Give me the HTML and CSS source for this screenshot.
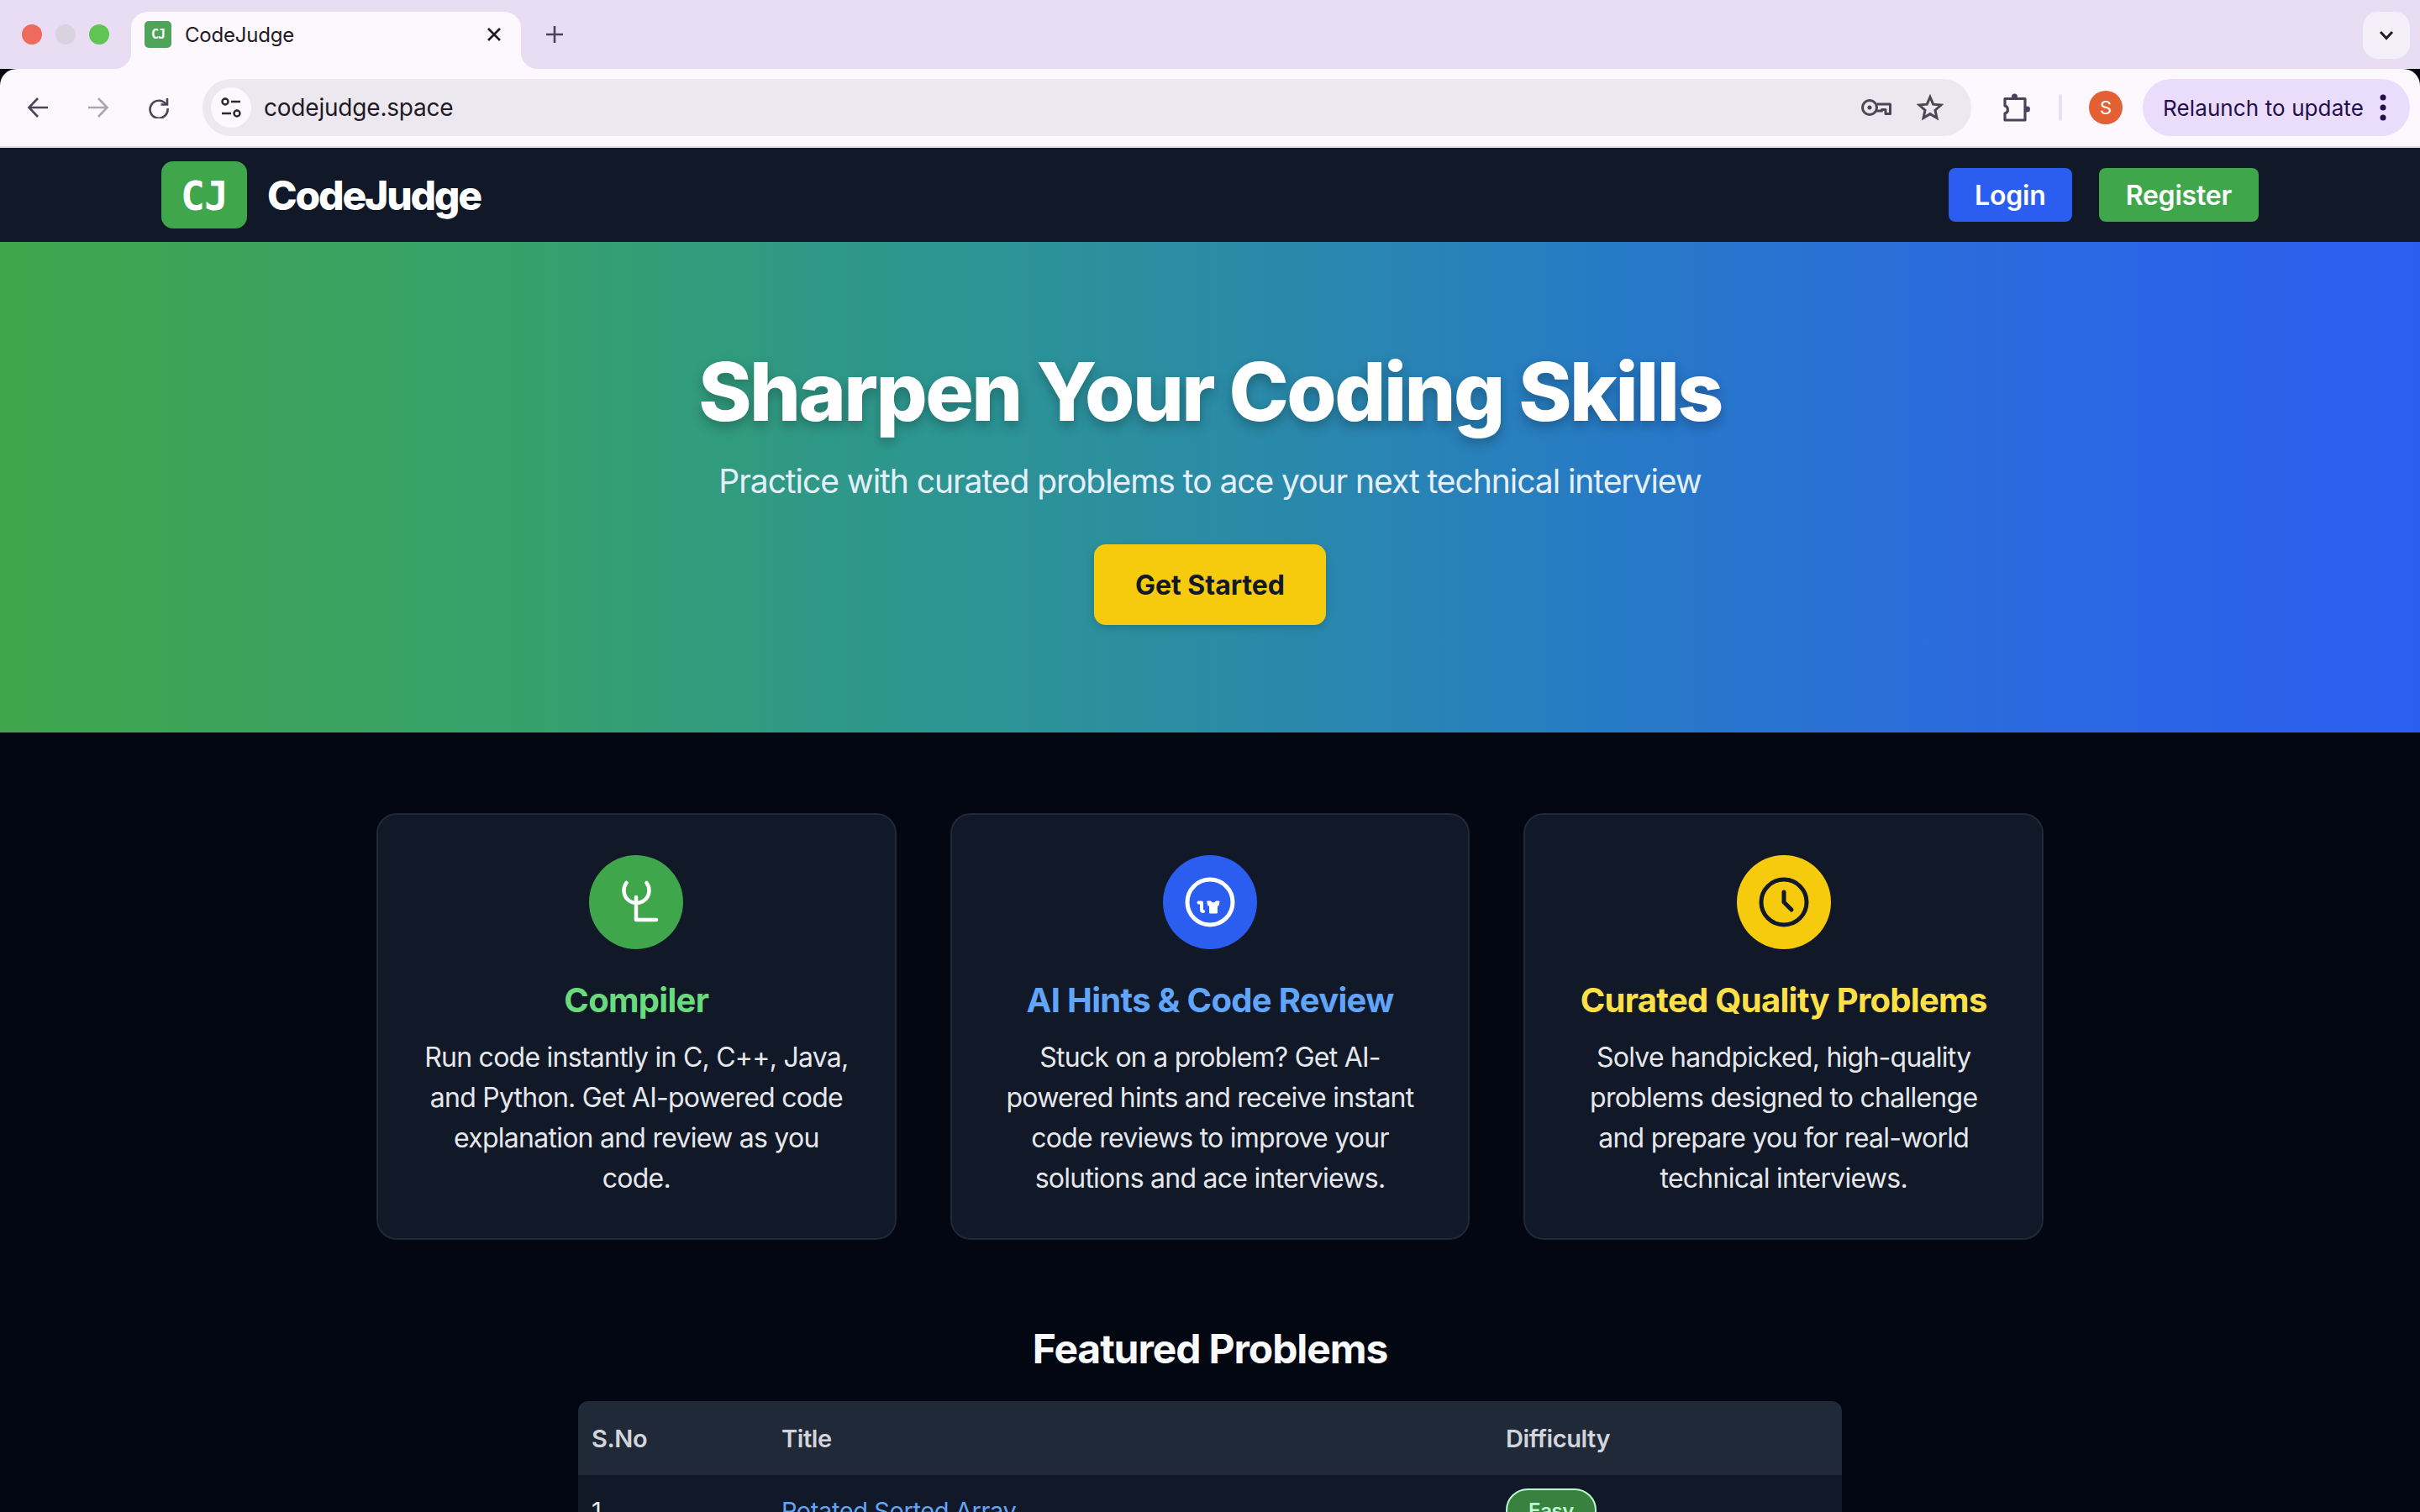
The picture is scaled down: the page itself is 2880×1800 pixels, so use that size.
FILE: index.html
```html
<!DOCTYPE html>
<html lang="en">
<head>
    <meta charset="UTF-8">
    <title>CodeJudge</title>
    <link rel="stylesheet" href="styles.css">
</head>
<body>
    <div class="window">
        <div class="tabstrip">
            <div class="lights">
                <span class="light red"></span>
                <span class="light grey"></span>
                <span class="light green"></span>
            </div>
            <div class="tab">
                <span class="favicon">CJ</span>
                <span class="tab-title">CodeJudge</span>
                <svg class="tab-close" width="20" height="20" viewBox="0 0 20 20"><path d="M3 3L17 17M17 3L3 17" stroke="#1f1a24" stroke-width="2.6" fill="none"/></svg>
            </div>
            <svg class="new-tab" width="22" height="22" viewBox="0 0 22 22"><path d="M11 1V21M1 11H21" stroke="#4a4458" stroke-width="2.6" fill="none"/></svg>
            <div class="tab-menu">
                <svg width="18" height="12" viewBox="0 0 18 12"><path d="M2 2L9 9.5L16 2" stroke="#1f1a24" stroke-width="3" fill="none"/></svg>
            </div>
        </div>
        <div class="toolbar">
            <svg class="nav-btn" width="26" height="26" viewBox="0 0 26 26"><path d="M25 13H3M13 2L2.500 13L13 24" stroke="#4a4458" stroke-width="2.600" fill="none"/></svg>
            <svg class="nav-btn" width="26" height="26" viewBox="0 0 26 26"><path d="M1 13H23M13 2L23.500 13L13 24" stroke="#aca6b4" stroke-width="2.600" fill="none"/></svg>
            <svg class="nav-btn" width="26" height="26" viewBox="0 0 26 26"><path d="M21.500 9A10.500 10.500 0 1 0 23.500 14M23 2V9.500H15.500" stroke="#4a4458" stroke-width="2.600" fill="none"/></svg>
            <div class="omnibox">
                <span class="site-info">
                    <svg width="26" height="26" viewBox="0 0 26 26" fill="none" stroke="#2a2533" stroke-width="2.400"><circle cx="6" cy="6" r="3.500"/><path d="M13 6H24M2 20H13"/><circle cx="20" cy="20" r="3.500"/></svg>
                </span>
                <span class="url">codejudge.space</span>
                <svg class="omni-icon key" width="36" height="22" viewBox="0 0 36 22" fill="none" stroke="#4a4654" stroke-width="3" stroke-linejoin="round"><circle cx="10" cy="11" r="8.500"/><circle cx="10" cy="11" r="2.500" fill="#4a4654" stroke="none"/><path d="M18.500 7H34.500V18.500H29V13.500H24.500V15H18"/></svg>
                <svg class="omni-icon" width="32" height="32" viewBox="0 0 32 32" fill="none" stroke="#4a4654" stroke-width="3"><path d="M16 3.500L19.700 12.200L29 13L22 19.200L24 28.500L16 23.600L8 28.500L10 19.200L3 13L12.300 12.200Z"/></svg>
            </div>
            <svg class="ext" width="34" height="36" viewBox="0 0 34 36" fill="none" stroke="#4a4458" stroke-width="3.200" stroke-linejoin="round"><path d="M3 7.500H27V33H3V25C7.500 24 7.500 17 3 16Z"/><circle cx="14.500" cy="5" r="3.500" fill="#4a4458" stroke="none"/><circle cx="29.500" cy="20" r="3.500" fill="#4a4458" stroke="none"/></svg>
            <span class="divider"></span>
            <span class="avatar">S</span>
            <div class="relaunch">
                <span>Relaunch to update</span>
                <svg width="8" height="32" viewBox="0 0 8 32" fill="#24104a"><circle cx="4" cy="4" r="3.500"/><circle cx="4" cy="16" r="3.500"/><circle cx="4" cy="28" r="3.500"/></svg>
            </div>
        </div>

        <nav class="navbar">
            <a class="brand" href="#">
                <span class="brand-logo">CJ</span>
                <span class="brand-name">CodeJudge</span>
            </a>
            <div class="nav-actions">
                <a class="btn btn-blue" href="#">Login</a>
                <a class="btn btn-green" href="#">Register</a>
            </div>
        </nav>

        <section class="hero">
            <h1>Sharpen Your Coding Skills</h1>
            <p>Practice with curated problems to ace your next technical interview</p>
            <a class="cta" href="#">Get Started</a>
        </section>

        <main class="content">
            <div class="features">
                <div class="card">
                    <span class="card-icon icon-green">
                        <svg width="112" height="112" viewBox="0 0 112 112" fill="none" stroke="#fff" stroke-width="4.500" stroke-linecap="round" stroke-linejoin="round"><path d="M44.500 33A15 15 0 1 0 68.500 33M56 50V77H80"/></svg>
                    </span>
                    <h3 class="title-green">Compiler</h3>
                    <p>Run code instantly in C, C++, Java, and Python. Get AI-powered code explanation and review as you code.</p>
                </div>
                <div class="card">
                    <span class="card-icon icon-blue">
                        <svg width="112" height="112" viewBox="0 0 112 112" fill="none" stroke="#fff" stroke-width="5" stroke-linecap="round" stroke-linejoin="round"><circle cx="56" cy="56" r="27"/><path d="M42.500 56.500H46V65Q46 67 48 67" stroke-width="4"/><path d="M53 55H57Q60 59 63 55H67L66 60H64.500V69H55.500V60H54Z" fill="#fff" stroke-width="1"/></svg>
                    </span>
                    <h3 class="title-blue">AI Hints &amp; Code Review</h3>
                    <p>Stuck on a problem? Get AI-powered hints and receive instant code reviews to improve your solutions and ace interviews.</p>
                </div>
                <div class="card">
                    <span class="card-icon icon-yellow">
                        <svg width="112" height="112" viewBox="0 0 112 112" fill="none" stroke="#111827" stroke-width="5" stroke-linecap="round" stroke-linejoin="round"><circle cx="56" cy="56" r="27"/><path d="M56 44V56L65 65"/></svg>
                    </span>
                    <h3 class="title-yellow">Curated Quality Problems</h3>
                    <p>Solve handpicked, high-quality problems designed to challenge and prepare you for real-world technical interviews.</p>
                </div>
            </div>

            <h2 class="section-title">Featured Problems</h2>
            <table class="problems">
                <thead>
                    <tr>
                        <th class="col-no">S.No</th>
                        <th class="col-title">Title</th>
                        <th class="col-diff">Difficulty</th>
                    </tr>
                </thead>
                <tbody>
                    <tr>
                        <td>1</td>
                        <td><a href="#">Rotated Sorted Array</a></td>
                        <td><span class="badge">Easy</span></td>
                    </tr>
                </tbody>
            </table>
        </main>
    </div>
</body>
</html>
```

FILE: styles.css
```css
* {
    box-sizing: border-box;
}
html, body {
    margin: 0;
    height: 100%;
}
body {
    font-family: Inter, "Liberation Sans", sans-serif;
    background-color: #030712;
    overflow: hidden;
}
a {
    text-decoration: none;
}
.window {
    height: 1800px;
    overflow: hidden;
    display: flex;
    flex-direction: column;
}

/* browser chrome */
.tabstrip {
    height: 82px;
    flex-shrink: 0;
    background-color: #e9ddf4;
    display: flex;
    align-items: flex-start;
    padding-left: 26px;
}
.lights {
    display: flex;
    gap: 16px;
    margin-top: 29px;
    width: 130px;
}
.light {
    width: 24px;
    height: 24px;
    border-radius: 50%;
}
.light.red { background-color: #ee6a5f; }
.light.grey { background-color: #d8d3de; }
.light.green { background-color: #61c555; }
.tab {
    position: relative;
    width: 464px;
    height: 68px;
    margin-top: 14px;
    background-color: #fdf7fe;
    border-radius: 20px 20px 0 0;
    display: flex;
    align-items: center;
    padding: 0 22px 14px 16px;
}
.tab::before,
.tab::after {
    content: "";
    position: absolute;
    bottom: 0;
    width: 20px;
    height: 20px;
}
.tab::before {
    left: -20px;
    background: radial-gradient(circle at 0 0, transparent 20px, #fdf7fe 20.5px);
}
.tab::after {
    right: -20px;
    background: radial-gradient(circle at 100% 0, transparent 20px, #fdf7fe 20.5px);
}
.favicon {
    width: 32px;
    height: 32px;
    border-radius: 5px;
    background-color: #4ea458;
    color: #fff;
    font-family: "DejaVu Sans Mono", monospace;
    font-size: 15px;
    font-weight: bold;
    letter-spacing: -1px;
    display: flex;
    align-items: center;
    justify-content: center;
}
.tab-title {
    margin-left: 16px;
    font-size: 24px;
    letter-spacing: -0.2px;
    color: #1f1a24;
    flex: 1;
}
.new-tab {
    margin: 30px 0 0 29px;
}
.tab-menu {
    margin-left: auto;
    margin-right: 12px;
    margin-top: 14px;
    width: 56px;
    height: 56px;
    border-radius: 18px;
    background-color: #f5effa;
    display: flex;
    align-items: center;
    justify-content: center;
}
.toolbar {
    height: 94px;
    flex-shrink: 0;
    background-color: #fdf7fe;
    border-bottom: 2px solid #e6e1e8;
    border-radius: 20px 20px 0 0;
    display: flex;
    align-items: center;
    padding: 0 12px 0 32px;
}
.nav-btn {
    margin-right: 46px;
}
.nav-btn:nth-child(3) {
    margin-right: 39px;
}
.omnibox {
    width: 2106px;
    height: 68px;
    border-radius: 34px;
    background-color: #ece8f0;
    display: flex;
    align-items: center;
    padding: 0 33px 0 10px;
}
.site-info {
    width: 48px;
    height: 48px;
    border-radius: 50%;
    background-color: #fdf7fe;
    display: flex;
    align-items: center;
    justify-content: center;
}
.url {
    margin-left: 15px;
    font-size: 28px;
    letter-spacing: -0.2px;
    color: #1f1a24;
    flex: 1;
}
.omni-icon.key {
    margin-right: 30px;
}
.ext {
    margin-left: 37px;
}
.divider {
    width: 4px;
    height: 32px;
    margin-left: 33px;
    border-radius: 2px;
    background-color: #e6dff5;
}
.avatar {
    width: 40px;
    height: 40px;
    margin-left: 32px;
    border-radius: 50%;
    background-color: #e26033;
    color: #fff;
    font-size: 22px;
    display: flex;
    align-items: center;
    justify-content: center;
}
.relaunch {
    width: 318px;
    height: 68px;
    margin-left: 24px;
    border-radius: 34px;
    background-color: #eadcfb;
    color: #24104a;
    font-size: 26px;
    letter-spacing: 0.1px;
    display: flex;
    align-items: center;
    justify-content: space-between;
    padding: 0 28px 0 24px;
}

/* site nav */
.navbar {
    height: 112px;
    flex-shrink: 0;
    background-color: #111827;
    display: flex;
    align-items: center;
    justify-content: space-between;
    padding: 0 192px;
}
.brand {
    display: flex;
    align-items: center;
    gap: 24px;
}
.brand-logo {
    width: 102px;
    height: 80px;
    padding-top: 2px;
    border-radius: 14px;
    background-color: #3fa64c;
    color: #fff;
    font-family: "DejaVu Sans Mono", monospace;
    font-size: 48px;
    font-weight: bold;
    letter-spacing: -1px;
    display: flex;
    align-items: center;
    justify-content: center;
}
.brand-name {
    font-size: 48px;
    font-weight: 800;
    letter-spacing: -2.2px;
    color: #fff;
}
.nav-actions {
    display: flex;
    gap: 32px;
}
.btn {
    height: 64px;
    padding: 0 32px;
    border-radius: 8px;
    color: #fff;
    font-size: 32px;
    font-weight: 600;
    letter-spacing: -0.2px;
    display: flex;
    align-items: center;
}
.btn-blue { background-color: #2b5ef0; padding: 0 31px; }
.btn-green { background-color: #3fa64c; }

/* hero */
.hero {
    height: 584px;
    flex-shrink: 0;
    background: linear-gradient(90deg, #3fa64c 0%, #36a06c 22%, #2d9690 38%, #2a8aa8 52%, #2779c8 68%, #2b6ade 82%, #2b5ef0 100%);
    display: flex;
    flex-direction: column;
    align-items: center;
    padding-top: 120px;
    color: #fff;
}
.hero h1 {
    margin: 0;
    font-size: 96px;
    line-height: 116px;
    font-weight: 800;
    letter-spacing: -2.55px;
    text-shadow: 0 6px 14px rgba(0, 0, 0, 0.25);
}
.hero p {
    margin: 19px 0 0;
    font-size: 39px;
    line-height: 60px;
    letter-spacing: -1.05px;
    color: #e5effa;
}
.cta {
    margin-top: 45px;
    width: 276px;
    height: 96px;
    border-radius: 14px;
    background-color: #f6cb0e;
    color: #111827;
    font-size: 32px;
    font-weight: 700;
    display: flex;
    align-items: center;
    justify-content: center;
    box-shadow: 0 4px 10px rgba(0, 0, 0, 0.15);
}

/* features */
.content {
    padding-top: 96px;
}
.features {
    width: 1984px;
    margin: 0 auto;
    display: grid;
    grid-template-columns: repeat(3, 1fr);
    gap: 64px;
}
.card {
    height: 508px;
    padding: 48px 48px 0;
    border: 2px solid #1f2937;
    border-radius: 24px;
    background-color: #111827;
    display: flex;
    flex-direction: column;
    align-items: center;
    text-align: center;
}
.card-icon {
    width: 112px;
    height: 112px;
    border-radius: 50%;
    flex-shrink: 0;
}
.card-icon svg {
    display: block;
}
.icon-green { background-color: #3fa64c; }
.icon-blue { background-color: #2b5ef0; }
.icon-yellow { background-color: #f6cb0e; }
.card h3 {
    margin: 33px 0 0;
    font-size: 40px;
    line-height: 56px;
    font-weight: 700;
    letter-spacing: -0.7px;
}
.title-green { color: #69db7c; }
.title-blue { color: #60a5fa; }
.title-yellow { color: #fde047; }
.card p {
    margin: 16px 0 0;
    font-size: 32px;
    line-height: 48px;
    letter-spacing: -0.75px;
    color: #e5e7eb;
}

/* featured problems */
.section-title {
    margin: 94px 0 0;
    text-align: center;
    font-size: 48px;
    line-height: 72px;
    font-weight: 700;
    letter-spacing: -1.1px;
    color: #f9fafb;
}
.problems {
    width: 1504px;
    margin: 26px auto 0;
    border-collapse: separate;
    border-spacing: 0;
    table-layout: fixed;
    font-size: 29px;
    letter-spacing: -0.4px;
}
.problems th {
    height: 88px;
    padding: 0 16px;
    text-align: left;
    font-weight: 600;
    color: #d1d5db;
    background-color: #1f2937;
}
.problems th:first-child { border-top-left-radius: 12px; }
.problems th:last-child { border-top-right-radius: 12px; }
.col-no { width: 226px; }
.col-title { width: 862px; }
.problems td {
    padding: 16px;
    color: #e5e7eb;
    background-color: #111827;
}
.problems td a {
    color: #60a5fa;
}
.badge {
    display: inline-block;
    padding: 7px 25px 5px;
    border: 2px solid #bbf7d0;
    border-radius: 30px;
    background-color: #38813f;
    color: #bbf7d0;
    font-size: 24px;
    line-height: 36px;
    font-weight: 600;
}
```
